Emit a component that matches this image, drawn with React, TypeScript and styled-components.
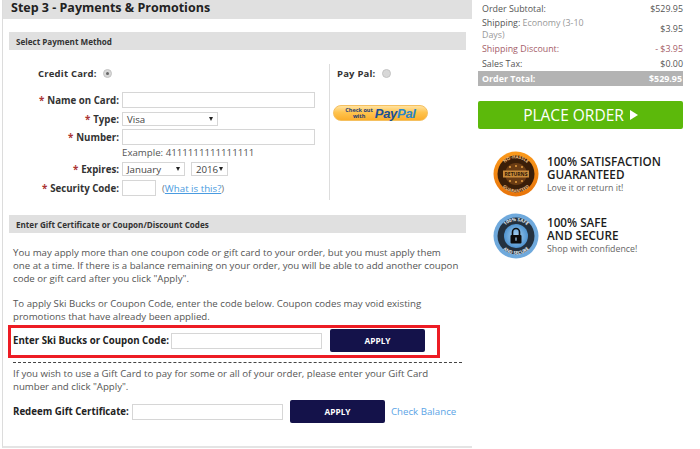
import styled, { createGlobalStyle } from "styled-components"

const GlobalStyle = createGlobalStyle`
  html, body {
    margin: 0;
    padding: 0;
    background: #fff;
    font-family: "Open Sans", "Liberation Sans", sans-serif;
    color: #444;
  }
`

const Page = styled.div`
  width: 700px;
  height: 449px;
  overflow: hidden;
  display: flex;
  align-items: flex-start;
`

const Main = styled.div`
  box-sizing: border-box;
  width: 470px;
  height: 448px;
  margin-left: 2px;
  border-left: 1px solid #dcdcdc;
  border-bottom: 2px solid #e4e4e4;
`

const StepTitle = styled.h2`
  margin: 0;
  height: 19px;
  padding-left: 8px;
  background: #e0e0e0;
  font-size: 12.5px;
  line-height: 16px;
  font-weight: 700;
  color: #222;
`

const SectionBar = styled.div`
  height: 18px;
  margin-left: 6px;
  width: 457px;
  padding-left: 7px;
  box-sizing: border-box;
  background: #e0e0e0;
  font-size: 8.1px;
  line-height: 19px;
  font-weight: 700;
  color: #333;
`

const Section = styled.section<{ $top: number }>`
  margin-top: ${(p) => p.$top}px;
`

const MethodRow = styled.div`
  display: flex;
  margin: 14px 0 0 6px;
  height: 136px;
`

const CardCol = styled.div`
  width: 320px;
  border-right: 1px solid #ddd;
`

const PaypalCol = styled.div`
  padding: 1px 0 0 7px;
`

const RadioRow = styled.div`
  display: flex;
  align-items: center;
  gap: 6px;
  height: 16px;
  font-size: 9.5px;
  font-weight: 700;
  color: #333;
  letter-spacing: 0.2px;
`

const CreditRadioRow = styled(RadioRow)`
  margin: 1px 0 0 29px;
`

const Radio = styled.span<{ $checked?: boolean }>`
  box-sizing: border-box;
  width: 9px;
  height: 9px;
  border-radius: 50%;
  background: #d8d8d8;
  border: 1px solid #c4c4c4;
  display: flex;
  align-items: center;
  justify-content: center;
  &::after {
    content: "";
    width: 3px;
    height: 3px;
    border-radius: 50%;
    background: ${(p) => (p.$checked ? "#666" : "transparent")};
  }
`

const FormGrid = styled.div`
  display: grid;
  grid-template-columns: 110px 1fr;
  column-gap: 3px;
  margin-top: 11px;
`

const Label = styled.label<{ $h: number; $mb?: number }>`
  height: ${(p) => p.$h}px;
  margin-bottom: ${(p) => p.$mb ?? 0}px;
  display: flex;
  align-items: center;
  justify-content: flex-end;
  font-size: 9.7px;
  font-weight: 700;
  color: #333;
  white-space: nowrap;
`

const Star = styled.span`
  color: #a33;
  margin-right: 3px;
`

const Field = styled.div<{ $h: number; $mb?: number }>`
  height: ${(p) => p.$h}px;
  margin-bottom: ${(p) => p.$mb ?? 0}px;
  display: flex;
  align-items: center;
  font-size: 9.7px;
`

const TextBox = styled.div<{ $w: number; $h?: number }>`
  box-sizing: border-box;
  width: ${(p) => p.$w}px;
  height: ${(p) => p.$h ?? 16}px;
  flex: none;
  background: #fff;
  border: 1px solid #d6d6d6;
`

const SelectBox = styled.div<{ $w: number; $mr?: number }>`
  box-sizing: border-box;
  width: ${(p) => p.$w}px;
  height: 14px;
  margin-right: ${(p) => p.$mr ?? 0}px;
  padding: 0 4px;
  display: flex;
  align-items: center;
  justify-content: space-between;
  background: #fff;
  border: 1px solid #d6d6d6;
  font-size: 9.7px;
  color: #444;
`

const Caret = styled.span`
  width: 0;
  height: 0;
  border-left: 2.5px solid transparent;
  border-right: 2.5px solid transparent;
  border-top: 4px solid #222;
`

const Hint = styled.div`
  margin-bottom: 2px;
  font-size: 9.7px;
  color: #555;
  white-space: nowrap;
`

const HelpLink = styled.span`
  margin-left: 6px;
  font-size: 9.7px;
  color: #777;
  a {
    color: #4a9be0;
    text-decoration: underline;
  }
`

const PaypalButton = styled.div`
  margin: 24px 0 0 -4px;
  width: 95px;
  height: 16px;
  border-radius: 8px;
  border: 1px solid #f5c060;
  box-sizing: border-box;
  background: linear-gradient(#ffe2a0 0%, #ffc44f 45%, #fbae2c 100%);
  display: flex;
  align-items: center;
  justify-content: center;
  gap: 2px;
`

const PaypalSmall = styled.span`
  font-size: 5.5px;
  line-height: 6px;
  font-weight: 700;
  color: #1d3a70;
  text-align: center;
`

const PaypalLogo = styled.span`
  font-family: "Liberation Sans", sans-serif;
  font-size: 13px;
  font-weight: 700;
  font-style: italic;
  color: #1a4f96;
  letter-spacing: -0.3px;
  b {
    color: #2a86c8;
  }
`

const Paragraph = styled.p<{ $top: number }>`
  margin: ${(p) => p.$top}px 0 0 10px;
  width: 447px;
  font-size: 9.66px;
  line-height: 13px;
  color: #555;
`

const CouponBox = styled.div`
  box-sizing: border-box;
  display: flex;
  align-items: flex-start;
  margin: 2px 0 0 5px;
  width: 432px;
  height: 33px;
  padding: 1px 0 0 2px;
  border: 3px solid #ed1c24;
`

const CodeRow = styled.div`
  display: flex;
  align-items: center;
  height: 23px;
`

const RedeemRow = styled(CodeRow)`
  margin: 7px 0 0 10px;
`

const CodeLabel = styled.span<{ $w: number }>`
  width: ${(p) => p.$w}px;
  flex: none;
  font-size: 9.7px;
  font-weight: 700;
  color: #222;
  white-space: nowrap;
`

const ApplyButton = styled.button<{ $ml: number }>`
  width: 95px;
  height: 23px;
  margin-left: ${(p) => p.$ml}px;
  flex: none;
  padding: 0;
  border: 0;
  border-radius: 2px;
  background: #14124a;
  color: #fff;
  font-family: inherit;
  font-size: 8.3px;
  font-weight: 700;
`

const DashedRule = styled.div`
  margin: 4px 0 0 10px;
  width: 449px;
  border-top: 1px dashed #444;
`

const CheckBalance = styled.a`
  margin-left: 6px;
  font-size: 9.7px;
  color: #5ba4e6;
  white-space: nowrap;
`

const Sidebar = styled.aside`
  width: 205px;
  margin-left: 6px;
  padding-top: 1px;
  flex: none;
`

const SummaryList = styled.div`
  padding-top: 1px;
`

const SummaryRow = styled.div<{ $tone?: string; $h: number }>`
  display: flex;
  align-items: center;
  justify-content: space-between;
  height: ${(p) => p.$h}px;
  padding-left: 4px;
  font-size: 8.9px;
  line-height: 12px;
  color: ${(p) => p.$tone ?? "#555"};
`

const ShippingText = styled.span`
  width: 115px;
  span {
    color: #999;
  }
`

const TotalRow = styled(SummaryRow)`
  background: #b3b3b3;
  color: #fff;
  font-weight: 700;
  padding: 0 1px 0 4px;
`

const PlaceOrder = styled.button`
  width: 205px;
  height: 28px;
  margin-top: 15px;
  padding: 0;
  border: 0;
  border-radius: 2px;
  background: #5cb90b;
  color: #fff;
  font-family: inherit;
  font-size: 15.5px;
  font-weight: 500;
  display: flex;
  align-items: center;
  justify-content: center;
  gap: 6px;
`

const PlayIcon = styled.span`
  width: 0;
  height: 0;
  border-left: 8px solid #fff;
  border-top: 5px solid transparent;
  border-bottom: 5px solid transparent;
`

const Badge = styled.div<{ $top: number }>`
  display: flex;
  align-items: center;
  gap: 8px;
  margin: ${(p) => p.$top}px 0 0 15px;
`

const BadgeBody = styled.div<{ $lift?: number }>`
  padding-bottom: ${(p) => p.$lift ?? 0}px;
`

const BadgeTitle = styled.div`
  font-size: 11.7px;
  line-height: 13px;
  font-weight: 600;
  color: #1c1c1c;
`

const BadgeNote = styled.div`
  margin-top: 1px;
  font-size: 8.8px;
  line-height: 12px;
  color: #666;
`

const ReturnsBadge = () => (
  <svg width="46" height="46" viewBox="0 0 46 46">
    <defs>
      <linearGradient id="retRing" x1="0" y1="0" x2="0" y2="1">
        <stop offset="0" stopColor="#fb9a1c" />
        <stop offset="1" stopColor="#e8740a" />
      </linearGradient>
      <path id="retTop" d="M7.5 23a15.5 15.5 0 0 1 31 0" />
      <path id="retBot" d="M4.5 23a18.5 18.5 0 0 0 37 0" />
    </defs>
    <circle cx="23" cy="23" r="22.5" fill="url(#retRing)" />
    <circle cx="23" cy="23" r="18.5" fill="#3a1e08" />
    <circle cx="23" cy="23" r="11" fill="#6a3c14" />
    <rect x="10" y="19.5" width="26" height="7" fill="#c98a3a" />
    <text x="23" y="25" textAnchor="middle" fontSize="5" fontWeight="700" fill="#2a1504">RETURNS</text>
    <text fontSize="4.4" fontWeight="700" fill="#f3c48a" textAnchor="middle">
      <textPath href="#retTop" startOffset="50%">NO-HASSLE</textPath>
    </text>
    <text fontSize="4.4" fontWeight="700" fill="#f3c48a" textAnchor="middle">
      <textPath href="#retBot" startOffset="50%">GUARANTEED</textPath>
    </text>
    <g fill="#e8a040">
      <circle cx="17" cy="16" r="1" />
      <circle cx="23" cy="15" r="1" />
      <circle cx="29" cy="16" r="1" />
      <circle cx="17" cy="30" r="1" />
      <circle cx="23" cy="31" r="1" />
      <circle cx="29" cy="30" r="1" />
    </g>
  </svg>
)

const SecureBadge = () => (
  <svg width="46" height="46" viewBox="0 0 46 46">
    <defs>
      <radialGradient id="secCore">
        <stop offset="0" stopColor="#a8d2f2" />
        <stop offset="1" stopColor="#4f93d0" />
      </radialGradient>
      <path id="secTop" d="M8 23a15 15 0 0 1 30 0" />
      <path id="secBot" d="M4.5 23a18.5 18.5 0 0 0 37 0" />
    </defs>
    <circle cx="23" cy="23" r="22.5" fill="#6fa9dc" />
    <circle cx="23" cy="23" r="18.5" fill="#24313f" />
    <circle cx="23" cy="23" r="12" fill="url(#secCore)" />
    <text fontSize="4.6" fontWeight="700" fill="#e8eef4" textAnchor="middle">
      <textPath href="#secTop" startOffset="50%">100% SAFE</textPath>
    </text>
    <text fontSize="4.6" fontWeight="700" fill="#e8eef4" textAnchor="middle">
      <textPath href="#secBot" startOffset="50%">AND SECURE</textPath>
    </text>
    <path d="M19.5 22v-3a3.5 3.5 0 0 1 7 0v3" fill="none" stroke="#0d0d0d" strokeWidth="1.6" />
    <rect x="17.5" y="22" width="11" height="8.5" rx="1" fill="#0d0d0d" />
    <rect x="22.4" y="24.5" width="1.2" height="3.2" fill="#a8d2f2" />
  </svg>
)

export default function App() {
  return (
    <>
      <GlobalStyle />
      <Page>
        <Main>
          <StepTitle>Step 3 - Payments &amp; Promotions</StepTitle>

          <Section $top={13}>
            <SectionBar>Select Payment Method</SectionBar>
            <MethodRow>
              <CardCol>
                <CreditRadioRow>
                  Credit Card: <Radio $checked />
                </CreditRadioRow>
                <FormGrid>
                  <Label $h={16} $mb={4}><Star>*</Star>Name on Card:</Label>
                  <Field $h={16} $mb={4}><TextBox $w={193} /></Field>

                  <Label $h={14} $mb={3}><Star>*</Star>Type:</Label>
                  <Field $h={14} $mb={3}><SelectBox $w={96}>Visa<Caret /></SelectBox></Field>

                  <Label $h={16}><Star>*</Star>Number:</Label>
                  <Field $h={16}><TextBox $w={193} /></Field>

                  <span />
                  <Field $h={17}><Hint>Example: 4111111111111111</Hint></Field>

                  <Label $h={14} $mb={4}><Star>*</Star>Expires:</Label>
                  <Field $h={14} $mb={4}>
                    <SelectBox $w={63} $mr={6}>January<Caret /></SelectBox>
                    <SelectBox $w={37}>2016<Caret /></SelectBox>
                  </Field>

                  <Label $h={16}><Star>*</Star>Security Code:</Label>
                  <Field $h={16}>
                    <TextBox $w={34} />
                    <HelpLink>(<a>What is this?</a>)</HelpLink>
                  </Field>
                </FormGrid>
              </CardCol>
              <PaypalCol>
                <RadioRow>
                  Pay Pal: <Radio />
                </RadioRow>
                <PaypalButton>
                  <PaypalSmall>Check out<br />with</PaypalSmall>
                  <PaypalLogo>Pay<b>Pal</b></PaypalLogo>
                </PaypalButton>
              </PaypalCol>
            </MethodRow>
          </Section>

          <Section $top={15}>
            <SectionBar>Enter Gift Certificate or Coupon/Discount Codes</SectionBar>
            <Paragraph $top={13}>
              You may apply more than one coupon code or gift card to your order, but you must apply them one at a time. If there is a balance remaining on your order, you will be able to add another coupon code or gift card after you click "Apply".
            </Paragraph>
            <Paragraph $top={12}>
              To apply Ski Bucks or Coupon Code, enter the code below. Coupon codes may void existing promotions that have already been applied.
            </Paragraph>
            <CouponBox>
              <CodeRow>
                <CodeLabel $w={158}>Enter Ski Bucks or Coupon Code:</CodeLabel>
                <TextBox $w={151} />
                <ApplyButton $ml={8}>APPLY</ApplyButton>
              </CodeRow>
            </CouponBox>
            <DashedRule />
            <Paragraph $top={4}>
              If you wish to use a Gift Card to pay for some or all of your order, please enter your Gift Card number and click "Apply".
            </Paragraph>
            <RedeemRow>
              <CodeLabel $w={119}>Redeem Gift Certificate:</CodeLabel>
              <TextBox $w={151} />
              <ApplyButton $ml={7}>APPLY</ApplyButton>
              <CheckBalance>Check Balance</CheckBalance>
            </RedeemRow>
          </Section>
        </Main>

        <Sidebar>
          <SummaryList>
            <SummaryRow $h={14}><span>Order Subtotal:</span><span>$529.95</span></SummaryRow>
            <SummaryRow $h={26}>
              <ShippingText>Shipping: <span>Economy (3-10 Days)</span></ShippingText>
              <span>$3.95</span>
            </SummaryRow>
            <SummaryRow $h={14} $tone="#a5606a"><span>Shipping Discount:</span><span>- $3.95</span></SummaryRow>
            <SummaryRow $h={15}><span>Sales Tax:</span><span>$0.00</span></SummaryRow>
          </SummaryList>
          <TotalRow $h={15}><span>Order Total:</span><span>$529.95</span></TotalRow>
          <PlaceOrder>PLACE ORDER <PlayIcon /></PlaceOrder>
          <Badge $top={22}>
            <ReturnsBadge />
            <BadgeBody>
              <BadgeTitle>100% SATISFACTION<br />GUARANTEED</BadgeTitle>
              <BadgeNote>Love it or return it!</BadgeNote>
            </BadgeBody>
          </Badge>
          <Badge $top={16}>
            <SecureBadge />
            <BadgeBody $lift={2}>
              <BadgeTitle>100% SAFE<br />AND SECURE</BadgeTitle>
              <BadgeNote>Shop with confidence!</BadgeNote>
            </BadgeBody>
          </Badge>
        </Sidebar>
      </Page>
    </>
  )
}
